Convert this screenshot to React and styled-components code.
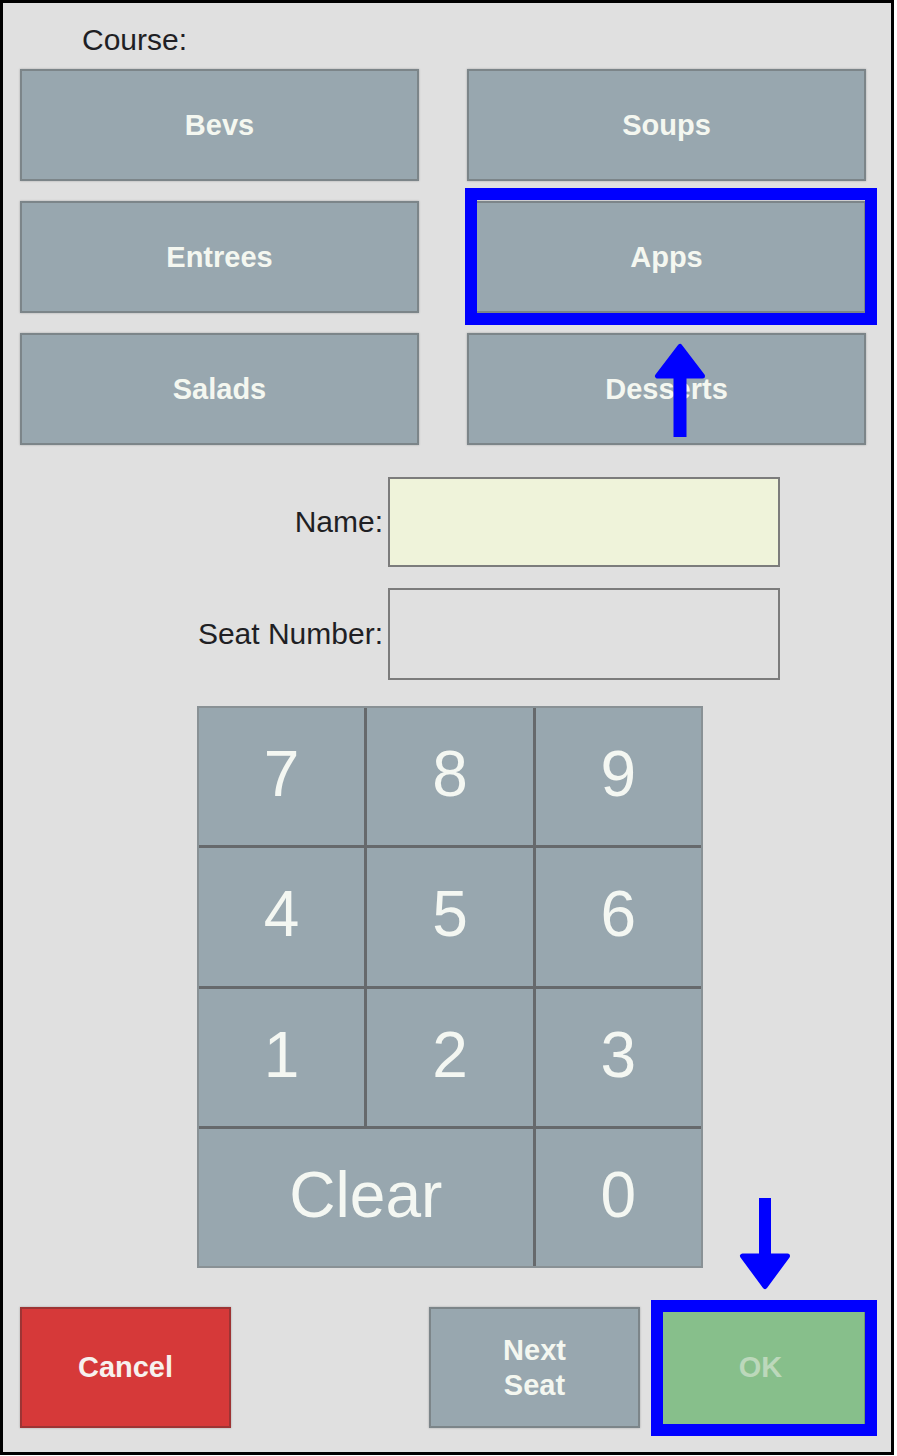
import React from 'react';
import styled, { createGlobalStyle } from 'styled-components';

const GlobalStyle = createGlobalStyle`
  body {
    margin: 0;
    background: #ffffff;
    font-family: "Liberation Sans", Arial, sans-serif;
  }
`;

// outer window frame
const Frame = styled.div`
  position: relative;
  box-sizing: border-box;
  width: 894px;
  height: 1455px;
  border: 3px solid #000;
  background: #e0e0e0;
  padding-left: 17px;
`;

const Title = styled.div`
  box-sizing: border-box;
  height: 66px;
  padding: 20px 0 0 62px;
  font-size: 30px;
  line-height: 34px;
  color: #1f1f24;
`;

const CourseGrid = styled.div`
  display: grid;
  width: 846px;
  grid-template-columns: 399px 399px;
  grid-auto-rows: 112px;
  column-gap: 48px;
  row-gap: 20px;
`;

const colors = {
  gray: { bg: '#98a7af', border: '#7c8589', text: '#f4f7f0' },
  red: { bg: '#d63939', border: '#9d3434', text: '#f7f1ee' },
  green: { bg: '#87bf8b', border: '#6e9972', text: '#bcd8bb' },
};

const Button = styled.button`
  position: relative;
  box-sizing: border-box;
  width: ${(p) => p.$width || 'auto'};
  height: 100%;
  margin: 0;
  padding: 0;
  border: 2px solid ${(p) => colors[p.$variant || 'gray'].border};
  background: ${(p) => colors[p.$variant || 'gray'].bg};
  box-shadow: 0 0 2px rgba(0, 0, 0, 0.25);
  color: ${(p) => colors[p.$variant || 'gray'].text};
  font-family: "Liberation Sans", Arial, sans-serif;
  font-weight: bold;
  font-size: 29px;
  line-height: 35px;
  text-align: center;
  overflow: visible;
  cursor: pointer;
`;

// blue annotation box drawn over a button (offsets from the padding box)
const Highlight = styled.span`
  position: absolute;
  top: ${(p) => p.$top}px;
  left: ${(p) => p.$left}px;
  right: ${(p) => p.$right}px;
  bottom: ${(p) => p.$bottom}px;
  border: 12px solid #0000ff;
  pointer-events: none;
`;

const Form = styled.div`
  display: flex;
  flex-direction: column;
  gap: 21px;
  margin-top: 32px;
`;

const FormRow = styled.div`
  display: flex;
  align-items: center;
  gap: 5px;
  height: ${(p) => p.$height}px;
`;

const Label = styled.label`
  width: 363px;
  text-align: right;
  font-size: 30px;
  color: #1f1f24;
`;

const Field = styled.div`
  box-sizing: border-box;
  width: 392px;
  height: 100%;
  border: 2px solid #7c7c7c;
  background: ${(p) => p.$bg || 'transparent'};
`;

const Keypad = styled.div`
  box-sizing: border-box;
  display: grid;
  grid-template-columns: repeat(3, 1fr);
  grid-template-rows: repeat(4, 1fr);
  gap: 3px;
  width: 506px;
  height: 562px;
  margin: 26px 0 0 177px;
  border: 2px solid #899195;
  background: #66696c;
`;

const Key = styled.div`
  display: flex;
  align-items: center;
  justify-content: center;
  grid-column: span ${(p) => p.$span || 1};
  background: #98a7af;
  color: #f4f7f2;
  font-size: 64px;
  line-height: 1;
  padding-bottom: 5px;
`;

const ActionRow = styled.div`
  display: flex;
  gap: 15px;
  width: 846px;
  height: 121px;
  margin-top: 39px;
`;

const Spacer = styled.div`
  flex: 1;
`;

const Arrow = styled.svg`
  position: absolute;
  left: ${(p) => p.$x}px;
  top: ${(p) => p.$y}px;
  pointer-events: none;
`;

const courses = ['Bevs', 'Soups', 'Entrees', 'Apps', 'Salads', 'Desserts'];
const keys = ['7', '8', '9', '4', '5', '6', '1', '2', '3'];

function App() {
  return (
    <>
      <GlobalStyle />
      <Frame>
        <Title>Course:</Title>
        <CourseGrid>
          {courses.map((c) => (
            <Button key={c}>
              {c}
              {c === 'Apps' && <Highlight $top={-15} $left={-4} $right={-13} $bottom={-14} />}
            </Button>
          ))}
        </CourseGrid>

        <Form>
          <FormRow $height={90}>
            <Label>Name:</Label>
            <Field $bg="#eff3da" />
          </FormRow>
          <FormRow $height={92}>
            <Label>Seat Number:</Label>
            <Field />
          </FormRow>
        </Form>

        <Keypad>
          {keys.map((k) => (
            <Key key={k}>{k}</Key>
          ))}
          <Key $span={2}>Clear</Key>
          <Key>0</Key>
        </Keypad>

        <ActionRow>
          <Button $variant="red" $width="211px">Cancel</Button>
          <Spacer />
          <Button $width="211px">
            Next
            <br />
            Seat
          </Button>
          <Button $variant="green" $width="211px">
            OK
            <Highlight $top={-9} $left={-6} $right={-13} $bottom={-10} />
          </Button>
        </ActionRow>

        <Arrow $x={647} $y={335} width="60" height="104" viewBox="0 0 60 104">
          <polygon points="30,8.5 7.5,38 52.5,38" fill="#0000ff" stroke="#0000ff" strokeWidth="5" strokeLinejoin="round" />
          <rect x="23.5" y="36" width="13" height="63" fill="#0000ff" />
        </Arrow>
        <Arrow $x={732} $y={1190} width="60" height="102" viewBox="0 0 60 102">
          <rect x="24" y="5" width="12" height="60" fill="#0000ff" />
          <polygon points="7.5,63 52.5,63 30,93.5" fill="#0000ff" stroke="#0000ff" strokeWidth="5" strokeLinejoin="round" />
        </Arrow>
      </Frame>
    </>
  );
}

export default App;
